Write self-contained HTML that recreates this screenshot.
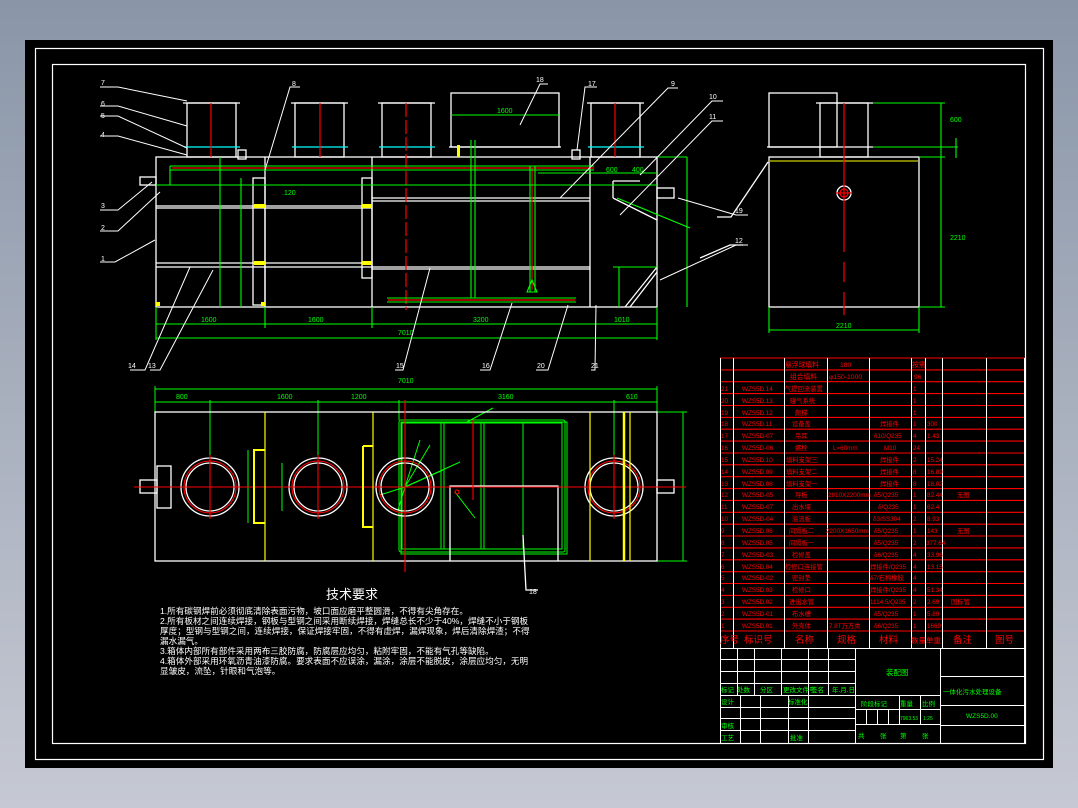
<!DOCTYPE html>
<html><head><meta charset="utf-8"><style>
html,body{margin:0;padding:0;width:1078px;height:808px;overflow:hidden;background:linear-gradient(#8a96a8,#c6c9d3);}
svg{position:absolute;left:0;top:0}
text{font-family:"Liberation Sans","Noto Sans CJK SC",sans-serif}
</style></head><body>
<svg width="1078" height="808" viewBox="0 0 1078 808" xmlns="http://www.w3.org/2000/svg">
<rect x="25" y="40" width="1028" height="728" fill="#000"/>
<rect x="35.5" y="48.5" width="1008" height="711" fill="none" stroke="#fff" stroke-width="1.2"/>
<rect x="52.5" y="64.5" width="973" height="679" fill="none" stroke="#fff" stroke-width="1.2"/>

<!-- ===== Front view ===== -->
<g stroke="#fff" stroke-width="1.3" fill="none">
<rect x="156" y="157" width="501" height="150"/>
<line x1="156" y1="206" x2="372" y2="206"/><line x1="156" y1="208" x2="372" y2="208"/>
<line x1="156" y1="263" x2="372" y2="263"/><line x1="156" y1="267" x2="372" y2="267"/>
<line x1="372" y1="198" x2="590" y2="198"/><line x1="372" y1="201" x2="590" y2="201"/>
<line x1="372" y1="267" x2="590" y2="267"/><line x1="372" y1="269" x2="590" y2="269"/>
<line x1="265" y1="157" x2="265" y2="307"/><line x1="372" y1="157" x2="372" y2="307"/>
<line x1="590" y1="157" x2="590" y2="307"/>
<rect x="253" y="178" width="12" height="127"/><rect x="362" y="178" width="10" height="100"/>
<!-- top boxes -->
<rect x="187" y="103" width="49" height="54"/><line x1="183" y1="103" x2="240" y2="103"/>
<rect x="295" y="103" width="49" height="54"/><line x1="291" y1="103" x2="348" y2="103"/>
<rect x="382" y="103" width="49" height="54"/><line x1="378" y1="103" x2="435" y2="103"/>
<rect x="591" y="103" width="49" height="54"/><line x1="587" y1="103" x2="644" y2="103"/>
<rect x="451" y="93" width="108" height="54"/>
<line x1="449" y1="147" x2="561" y2="147"/>
<rect x="613" y="196" width="44" height="111" stroke="#fff" stroke-width="0"/>
<rect x="140" y="177" width="16" height="8"/><rect x="657" y="188" width="17" height="10"/>
<rect x="238" y="150" width="8" height="9"/><rect x="572" y="150" width="8" height="9"/>
<line x1="613" y1="181" x2="640" y2="181"/><line x1="613" y1="181" x2="613" y2="198"/>
<line x1="613" y1="198" x2="657" y2="220"/>
<line x1="625" y1="307" x2="657" y2="267"/><line x1="630" y1="307" x2="657" y2="272"/>
</g>
<g stroke="#0ff" stroke-width="1.3">
<line x1="184" y1="147" x2="240" y2="147"/><line x1="292" y1="147" x2="348" y2="147"/>
<line x1="379" y1="147" x2="435" y2="147"/><line x1="588" y1="147" x2="644" y2="147"/>
</g>
<g stroke="#f00" stroke-width="1.2">
<line x1="211" y1="103" x2="211" y2="157"/><line x1="320" y1="103" x2="320" y2="157"/>
<line x1="406" y1="103" x2="406" y2="310" stroke-dasharray="14 3"/><line x1="615" y1="103" x2="615" y2="157"/>
<line x1="172" y1="168" x2="594" y2="168"/><line x1="532" y1="168" x2="532" y2="290"/>
<line x1="388" y1="300" x2="575" y2="300"/>
</g>
<g stroke="#0f0" stroke-width="1.1" fill="none">
<line x1="170" y1="166" x2="594" y2="166"/><line x1="170" y1="170" x2="594" y2="170"/>
<line x1="170" y1="166" x2="170" y2="185"/>
<line x1="530" y1="166" x2="530" y2="292"/><line x1="535" y1="166" x2="535" y2="292"/>
<line x1="471" y1="140" x2="471" y2="298"/><line x1="475" y1="140" x2="475" y2="298"/>
<line x1="387" y1="298" x2="576" y2="298"/><line x1="387" y1="302" x2="576" y2="302"/>
<line x1="156" y1="185" x2="657" y2="185"/>
<line x1="156" y1="324" x2="657" y2="324"/><line x1="156" y1="338" x2="657" y2="338"/>
<line x1="156" y1="307" x2="156" y2="340"/><line x1="265" y1="307" x2="265" y2="328"/>
<line x1="372" y1="307" x2="372" y2="328"/><line x1="657" y1="307" x2="657" y2="340"/>
<line x1="220" y1="157" x2="220" y2="307"/><line x1="241" y1="178" x2="241" y2="307"/>
<line x1="451" y1="115" x2="559" y2="115"/>
<line x1="657" y1="157" x2="687" y2="157"/><line x1="687" y1="157" x2="687" y2="307"/>
<line x1="613" y1="267" x2="657" y2="267"/><line x1="619" y1="267" x2="619" y2="307"/>
<line x1="617" y1="198" x2="690" y2="228"/>
<path d="M527 292 L532 280 L537 292 Z"/>
<line x1="538" y1="173" x2="657" y2="173"/>
</g>
<g fill="#ff0"><rect x="254" y="204" width="11" height="4"/><rect x="254" y="261" width="11" height="4"/><rect x="362" y="204" width="10" height="4"/><rect x="362" y="261" width="10" height="4"/><rect x="156" y="302" width="4" height="4"/><rect x="261" y="302" width="4" height="4"/><rect x="457" y="145" width="3" height="12"/></g>
<g fill="#0f0" font-size="7">
<text x="201" y="322">1600</text><text x="308" y="322">1600</text><text x="473" y="322">3200</text><text x="614" y="322">1010</text><text x="398" y="335">7010</text>
<text x="497" y="113">1600</text><text x="606" y="172">600</text><text x="632" y="172">400</text><text x="282" y="195">.120</text>
</g>
<!-- leaders -->
<g stroke="#fff" stroke-width="1" fill="none">
<polyline points="100,87 118,87 187,101"/><polyline points="100,106 118,106 187,126"/><polyline points="100,116 118,116 187,148"/><polyline points="100,136 118,136 187,155"/>
<polyline points="100,210 118,210 152,182"/><polyline points="100,231 118,231 160,192"/><polyline points="100,262 115,262 155,240"/>
<polyline points="300,87 290,87 265,170"/><polyline points="548,84 540,84 520,125"/><polyline points="597,87 585,87 577,150"/>
<polyline points="678,88 668,88 560,198"/><polyline points="723,101 712,101 640,175"/><polyline points="723,121 712,121 620,215"/>
<polyline points="748,215 736,215 678,198"/><polyline points="748,245 736,245 660,280"/>
<polyline points="130,370 145,370 190,267"/><polyline points="150,370 160,370 213,270"/><polyline points="395,370 403,370 430,268"/>
<polyline points="480,370 490,370 512,303"/><polyline points="536,370 548,370 568,305"/><polyline points="591,370 595,370 596,305"/>
</g>
<g fill="#fff" font-size="7">
<text x="101" y="85">7</text><text x="101" y="106">6</text><text x="101" y="118">5</text><text x="101" y="137">4</text><text x="101" y="208">3</text><text x="101" y="230">2</text><text x="101" y="261">1</text>
<text x="292" y="86">8</text><text x="536" y="82">18</text><text x="588" y="86">17</text><text x="671" y="86">9</text><text x="709" y="99">10</text><text x="709" y="119">11</text><text x="735" y="213">19</text><text x="735" y="243">12</text>
<text x="128" y="368">14</text><text x="148" y="368">13</text><text x="396" y="368">15</text><text x="482" y="368">16</text><text x="537" y="368">20</text><text x="591" y="368">21</text>
</g>

<!-- ===== Side view ===== -->
<g stroke="#fff" stroke-width="1.3" fill="none">
<rect x="769" y="157" width="150" height="150"/>
<rect x="769" y="93" width="68" height="54"/>
<rect x="820" y="103" width="48" height="54"/><line x1="816" y1="103" x2="873" y2="103"/>
<line x1="767" y1="147" x2="873" y2="147"/>
<circle cx="844" cy="193" r="7"/>
<polyline points="717,217 731,217 768,162"/><polyline points="700,258 730,245 743,245"/>
</g>
<line x1="770" y1="161" x2="918" y2="161" stroke="#ff0"/>
<g stroke="#f00" stroke-width="1.2"><line x1="844" y1="103" x2="844" y2="252"/><line x1="844" y1="262" x2="844" y2="282" /><line x1="844" y1="292" x2="844" y2="315"/><circle cx="844" cy="193" r="4" fill="none"/><line x1="836" y1="193" x2="852" y2="193"/></g>
<g stroke="#0f0" stroke-width="1.1" fill="none">
<line x1="873" y1="103" x2="945" y2="103"/><line x1="873" y1="147" x2="958" y2="147"/><line x1="919" y1="157" x2="945" y2="157"/><line x1="919" y1="307" x2="945" y2="307"/>
<line x1="941" y1="103" x2="941" y2="307"/><line x1="956" y1="138" x2="956" y2="158"/>
<line x1="769" y1="307" x2="769" y2="333"/><line x1="919" y1="307" x2="919" y2="333"/><line x1="769" y1="330" x2="919" y2="330"/>
</g>
<g fill="#0f0" font-size="7"><text x="836" y="328">2210</text><text x="950" y="122">600</text><text x="950" y="240">2210</text></g>

<!-- ===== Plan view ===== -->
<g stroke="#0f0" stroke-width="1" fill="none">
<line x1="155" y1="389" x2="657" y2="389"/><line x1="155" y1="402" x2="657" y2="402"/>
<line x1="155" y1="386" x2="155" y2="412"/><line x1="657" y1="386" x2="657" y2="412"/>
<line x1="210" y1="400" x2="210" y2="462"/><line x1="318" y1="400" x2="318" y2="462"/><line x1="614" y1="400" x2="614" y2="462"/><line x1="399" y1="400" x2="399" y2="420"/>
<line x1="657" y1="412" x2="687" y2="412"/><line x1="657" y1="561" x2="687" y2="561"/><line x1="683" y1="412" x2="683" y2="561"/>
<rect x="399" y="420" width="166" height="132" rx="2"/><rect x="402" y="423" width="160" height="126"/><rect x="399" y="420" width="166" height="132" transform="translate(2,2)"/>
<line x1="441" y1="423" x2="441" y2="549"/><line x1="444" y1="423" x2="444" y2="549"/><line x1="481" y1="423" x2="481" y2="549"/><line x1="484" y1="423" x2="484" y2="549"/><line x1="523" y1="423" x2="523" y2="549"/>
<line x1="405" y1="487" x2="460" y2="462"/><line x1="405" y1="487" x2="420" y2="440"/><line x1="405" y1="487" x2="430" y2="445"/><line x1="405" y1="487" x2="443" y2="470"/><line x1="405" y1="487" x2="380" y2="495"/><line x1="405" y1="487" x2="398" y2="510"/>
<line x1="465" y1="423" x2="493" y2="408"/><line x1="455" y1="492" x2="475" y2="518"/>
<line x1="171" y1="475" x2="171" y2="506"/><line x1="248" y1="450" x2="248" y2="523"/><line x1="282" y1="463" x2="282" y2="511"/>
</g>
<g stroke="#fff" stroke-width="1.3" fill="none">
<rect x="155" y="412" width="502" height="149"/>
<rect x="140" y="480" width="17" height="13"/><rect x="657" y="480" width="17" height="13"/>
<rect x="157" y="466" width="14" height="42"/>
<polyline points="450,561 450,486 558,486 558,561"/>
<circle cx="210" cy="487" r="29"/><circle cx="210" cy="487" r="24"/>
<circle cx="318" cy="487" r="29"/><circle cx="318" cy="487" r="24"/>
<circle cx="405" cy="487" r="29"/><circle cx="405" cy="487" r="24"/>
<circle cx="614" cy="487" r="29"/><circle cx="614" cy="487" r="24"/>
<polyline points="523,535 526,590 538,590"/>
</g>
<g stroke="#f00" stroke-width="1.1" fill="none">
<circle cx="210" cy="487" r="26"/><circle cx="318" cy="487" r="26"/><circle cx="405" cy="487" r="26"/><circle cx="614" cy="487" r="26"/>
<line x1="134" y1="487" x2="686" y2="487"/>
<line x1="210" y1="455" x2="210" y2="519"/><line x1="318" y1="455" x2="318" y2="519"/><line x1="405" y1="400" x2="405" y2="572"/><line x1="614" y1="455" x2="614" y2="519"/>
<line x1="473" y1="420" x2="473" y2="500"/><circle cx="457" cy="492" r="2"/>
</g>
<g stroke="#ff0" stroke-width="1.2" fill="none">
<line x1="265" y1="412" x2="265" y2="561"/><line x1="373" y1="412" x2="373" y2="561"/><line x1="590" y1="412" x2="590" y2="561"/><line x1="624" y1="412" x2="624" y2="561" stroke-width="2.5"/><line x1="630" y1="412" x2="630" y2="561"/>
<polyline points="265,450 254,450 254,523 265,523" stroke-width="2"/><polyline points="363,446 363,527 373,527" stroke-width="2"/><line x1="363" y1="446" x2="373" y2="446" stroke-width="2"/>
</g>
<g fill="#0f0" font-size="7"><text x="398" y="383">7010</text><text x="176" y="399">800</text><text x="277" y="399">1600</text><text x="351" y="399">1200</text><text x="498" y="399">3160</text><text x="626" y="399">610</text></g>
<text x="529" y="594" fill="#fff" font-size="7">18</text>

<!-- tech requirements -->
<text x="326" y="599" fill="#fff" font-size="13">技术要求</text>
<g fill="#fff" font-size="8.6">
<text x="160" y="614">1.所有碳钢焊前必须彻底清除表面污物，坡口面应磨平整圆滑，不得有尖角存在。</text>
<text x="160" y="624">2.所有板材之间连续焊接，钢板与型钢之间采用断续焊接，焊缝总长不少于40%，焊缝不小于钢板</text>
<text x="160" y="634">厚度；型钢与型钢之间，连续焊接，保证焊接牢固，不得有虚焊，漏焊现象，焊后清除焊渣；不得</text>
<text x="160" y="644">漏水漏气。</text>
<text x="160" y="654">3.箱体内部所有部件采用两布三胶防腐，防腐层应均匀，粘附牢固，不能有气孔等缺陷。</text>
<text x="160" y="664">4.箱体外部采用环氧沥青油漆防腐。要求表面不应误涂，漏涂，涂层不能脱皮，涂层应均匀，无明</text>
<text x="160" y="674">显皱皮，流坠，针眼和气泡等。</text>
</g>

<!-- ===== Parts table ===== -->
<g stroke="#f00" stroke-width="1.1">
<line x1="720" y1="358" x2="1025" y2="358"/><line x1="720" y1="369.9" x2="1025" y2="369.9"/><line x1="720" y1="381.7" x2="1025" y2="381.7"/><line x1="720" y1="393.6" x2="1025" y2="393.6"/><line x1="720" y1="405.5" x2="1025" y2="405.5"/><line x1="720" y1="417.4" x2="1025" y2="417.4"/><line x1="720" y1="429.2" x2="1025" y2="429.2"/><line x1="720" y1="441.1" x2="1025" y2="441.1"/><line x1="720" y1="453" x2="1025" y2="453"/><line x1="720" y1="464.8" x2="1025" y2="464.8"/><line x1="720" y1="476.7" x2="1025" y2="476.7"/><line x1="720" y1="488.6" x2="1025" y2="488.6"/><line x1="720" y1="500.4" x2="1025" y2="500.4"/><line x1="720" y1="512.3" x2="1025" y2="512.3"/><line x1="720" y1="524.2" x2="1025" y2="524.2"/><line x1="720" y1="536" x2="1025" y2="536"/><line x1="720" y1="547.9" x2="1025" y2="547.9"/><line x1="720" y1="559.8" x2="1025" y2="559.8"/><line x1="720" y1="571.7" x2="1025" y2="571.7"/><line x1="720" y1="583.5" x2="1025" y2="583.5"/><line x1="720" y1="595.4" x2="1025" y2="595.4"/><line x1="720" y1="607.3" x2="1025" y2="607.3"/><line x1="720" y1="619.1" x2="1025" y2="619.1"/><line x1="720" y1="631" x2="1025" y2="631"/>
</g>
<g stroke="#fff" stroke-width="1">
<line x1="720.5" y1="358" x2="720.5" y2="743"/><line x1="733.5" y1="358" x2="733.5" y2="648"/><line x1="784.5" y1="358" x2="784.5" y2="648"/><line x1="827.5" y1="358" x2="827.5" y2="648"/><line x1="869.5" y1="358" x2="869.5" y2="648"/><line x1="911.5" y1="358" x2="911.5" y2="648"/><line x1="925.5" y1="358" x2="925.5" y2="648"/><line x1="942.5" y1="358" x2="942.5" y2="648"/><line x1="986.5" y1="358" x2="986.5" y2="648"/><line x1="1024.5" y1="358" x2="1024.5" y2="743"/>
<line x1="720" y1="648.5" x2="1025" y2="648.5"/>
<!-- title block -->
<line x1="720" y1="659.5" x2="855" y2="659.5"/><line x1="720" y1="671.5" x2="855" y2="671.5"/><line x1="720" y1="683.5" x2="855" y2="683.5"/><line x1="720" y1="695.5" x2="855" y2="695.5"/><line x1="720" y1="707.5" x2="855" y2="707.5"/><line x1="720" y1="718.5" x2="855" y2="718.5"/><line x1="720" y1="730.5" x2="855" y2="730.5"/>
<line x1="737.5" y1="648" x2="737.5" y2="695"/><line x1="754.5" y1="648" x2="754.5" y2="695"/><line x1="781.5" y1="648" x2="781.5" y2="695"/><line x1="808.5" y1="648" x2="808.5" y2="743"/><line x1="828.5" y1="648" x2="828.5" y2="695"/>
<line x1="740.5" y1="695" x2="740.5" y2="743"/><line x1="760.5" y1="695" x2="760.5" y2="743"/><line x1="788.5" y1="695" x2="788.5" y2="743"/>
<line x1="855.5" y1="648" x2="855.5" y2="743"/><line x1="940.5" y1="648" x2="940.5" y2="743"/>
<line x1="855" y1="695.5" x2="940" y2="695.5"/><line x1="855" y1="709.5" x2="940" y2="709.5"/><line x1="855" y1="724.5" x2="940" y2="724.5"/>
<line x1="866.5" y1="709" x2="866.5" y2="724"/><line x1="877.5" y1="709" x2="877.5" y2="724"/><line x1="888.5" y1="709" x2="888.5" y2="724"/><line x1="899.5" y1="695" x2="899.5" y2="724"/><line x1="920.5" y1="695" x2="920.5" y2="724"/>
<line x1="940" y1="676.5" x2="1025" y2="676.5"/><line x1="940" y1="705.5" x2="1025" y2="705.5"/><line x1="940" y1="725.5" x2="1025" y2="725.5"/>
<line x1="720" y1="743.5" x2="1025" y2="743.5"/>
</g>
<g fill="#f00" font-size="6.8">
<text x="785" y="367">悬浮球填料</text><text x="840" y="367">180</text><text x="912" y="367">按需</text>
<text x="790" y="379">组合填料</text><text x="829" y="379">φ150-1000</text><text x="914" y="379">96</text>
<g font-size="6.3">
<text x="721" y="391">21</text><text x="742" y="391">WZS5D.14</text><text x="785" y="391">气提回流装置</text><text x="913" y="391">1</text>
<text x="721" y="403">20</text><text x="742" y="403">WZS5D.13</text><text x="790" y="403">曝气系统</text><text x="913" y="403">1</text>
<text x="721" y="415">19</text><text x="742" y="415">WZS5D.12</text><text x="795" y="415">爬梯</text><text x="913" y="415">1</text>
<text x="721" y="426">18</text><text x="742" y="426">WZS5D.11</text><text x="792" y="426">设备盖</text><text x="880" y="426">焊接件</text><text x="913" y="426">1</text><text x="927" y="426">300</text>
<text x="721" y="438">17</text><text x="742" y="438">WZS5D-07</text><text x="795" y="438">吊耳</text><text x="874" y="438">δ10/Q235</text><text x="913" y="438">4</text><text x="927" y="438">1.43</text>
<text x="721" y="450">16</text><text x="742" y="450">WZS5D-06</text><text x="795" y="450">螺栓</text><text x="833" y="450">L=60mm</text><text x="884" y="450">M10</text><text x="913" y="450">24</text>
<text x="721" y="462">15</text><text x="742" y="462">WZS5D.10</text><text x="786" y="462">填料支架三</text><text x="880" y="462">焊接件</text><text x="913" y="462">2</text><text x="927" y="462">15.24</text>
<text x="721" y="474">14</text><text x="742" y="474">WZS5D.09</text><text x="786" y="474">填料支架二</text><text x="880" y="474">焊接件</text><text x="913" y="474">8</text><text x="927" y="474">16.89</text>
<text x="721" y="486">13</text><text x="742" y="486">WZS5D.08</text><text x="786" y="486">填料支架一</text><text x="880" y="486">焊接件</text><text x="913" y="486">8</text><text x="927" y="486">18.02</text>
<text x="721" y="497">12</text><text x="742" y="497">WZS5D-05</text><text x="795" y="497">导板</text><text x="828" y="497">2810X2200mm</text><text x="874" y="497">δ5/Q235</text><text x="913" y="497">1</text><text x="927" y="497">82.44</text><text x="957" y="497">无图</text>
<text x="721" y="509">11</text><text x="742" y="509">WZS5D-07</text><text x="792" y="509">出水堰</text><text x="878" y="509">δ/Q235</text><text x="913" y="509">1</text><text x="927" y="509">62.4</text>
<text x="721" y="521">10</text><text x="742" y="521">WZS5D-04</text><text x="792" y="521">溢流板</text><text x="873" y="521">δ3/SS304</text><text x="913" y="521">2</text><text x="927" y="521">8.93</text>
<text x="721" y="533">9</text><text x="742" y="533">WZS5D.06</text><text x="789" y="533">间隔板二</text><text x="826" y="533">2200X1650mm</text><text x="874" y="533">δ5/Q235</text><text x="913" y="533">1</text><text x="927" y="533">143</text><text x="957" y="533">无图</text>
<text x="721" y="545">8</text><text x="742" y="545">WZS5D.05</text><text x="789" y="545">间隔板一</text><text x="874" y="545">δ5/Q235</text><text x="913" y="545">2</text><text x="926" y="545">377.64</text>
<text x="721" y="557">7</text><text x="742" y="557">WZS5D-03</text><text x="792" y="557">检修盖</text><text x="874" y="557">δ6/Q235</text><text x="913" y="557">4</text><text x="927" y="557">33.96</text>
<text x="721" y="569">6</text><text x="742" y="569">WZS5D.04</text><text x="785" y="569">检修口连接管</text><text x="870" y="569">焊接件/Q235</text><text x="913" y="569">4</text><text x="927" y="569">13.15</text>
<text x="721" y="580">5</text><text x="742" y="580">WZS5D-02</text><text x="792" y="580">密封垫</text><text x="870" y="580">δ7/石棉橡胶</text><text x="913" y="580">4</text>
<text x="721" y="592">4</text><text x="742" y="592">WZS5D.03</text><text x="792" y="592">检修口</text><text x="870" y="592">焊接件/Q235</text><text x="913" y="592">4</text><text x="927" y="592">51.34</text>
<text x="721" y="604">3</text><text x="742" y="604">WZS5D.02</text><text x="789" y="604">进出水管</text><text x="870" y="604">1114.5/Q235</text><text x="913" y="604">2</text><text x="927" y="604">2.69</text><text x="951" y="604">国标管</text>
<text x="721" y="616">2</text><text x="742" y="616">WZS5D-01</text><text x="792" y="616">布水槽</text><text x="874" y="616">δ5/Q235</text><text x="913" y="616">1</text><text x="927" y="616">5.89</text>
<text x="721" y="628">1</text><text x="742" y="628">WZS5D.01</text><text x="792" y="628">外壳体</text><text x="829" y="628">7.8T万方类</text><text x="874" y="628">δ6/Q235</text><text x="913" y="628">1</text><text x="927" y="628">1669</text>
</g>
<g font-size="9.5"><text x="720" y="643">序号</text><text x="744" y="643">标识号</text><text x="795" y="643">名称</text><text x="837" y="643">规格</text><text x="879" y="643">材料</text><text x="911" y="643" font-size="7.5">数量</text><text x="926" y="643" font-size="7.5">单重</text><text x="953" y="643">备注</text><text x="995" y="643">图号</text></g>
</g>
<g fill="#0f0" font-size="6.5">
<text x="886" y="675" font-size="7.5">装配图</text>
<text x="943" y="694">一体化污水处理设备</text>
<text x="966" y="718">WZS5D.00</text>
<text x="721" y="692">标记</text><text x="737" y="692">处数</text><text x="760" y="692">分区</text><text x="783" y="692">更改文件号</text><text x="811" y="692">签名</text><text x="832" y="692">年.月.日</text>
<text x="721" y="704">设计</text><text x="788" y="704">标准化</text>
<text x="721" y="728">审核</text><text x="721" y="740">工艺</text><text x="790" y="740">批准</text>
<text x="861" y="706">阶段标记</text><text x="900" y="706">重量</text><text x="922" y="706">比例</text>
<text x="900" y="720" font-size="5">7963.53</text><text x="923" y="720" font-size="5">1:25</text>
<text x="858" y="738">共</text><text x="880" y="738">张</text><text x="900" y="738">第</text><text x="922" y="738">张</text>
</g>
</svg>
</body></html>
